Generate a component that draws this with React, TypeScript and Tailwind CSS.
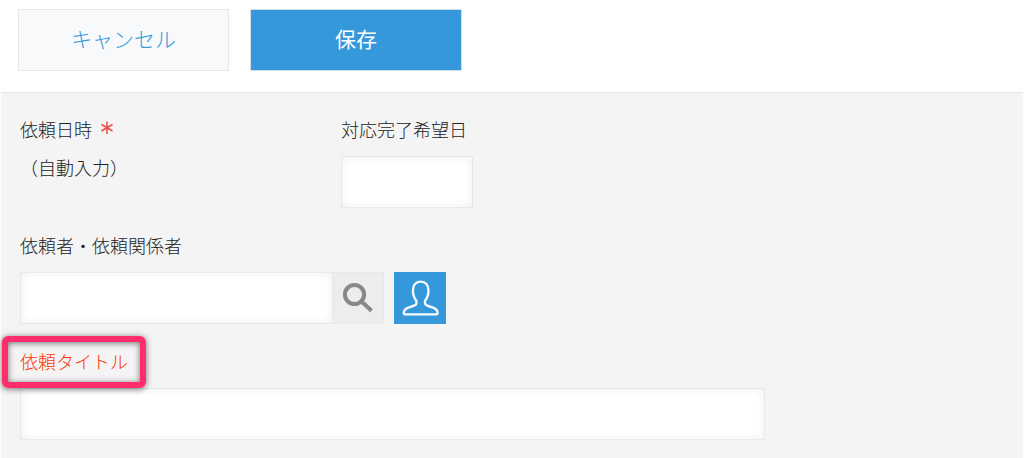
import type { ReactNode } from "react";

const inputClass =
  "block h-[52px] border border-[#e6e9e9] bg-white px-3 text-lg text-[#333333] shadow-[inset_0_0_8px_rgba(0,0,0,0.07)] outline-none";

function FieldLabel({ htmlFor, children }: { htmlFor: string; children: ReactNode }) {
  return (
    <label htmlFor={htmlFor} className="block w-fit text-lg leading-[22px]">
      {children}
    </label>
  );
}

function SearchIcon() {
  return (
    <svg width="32" height="32" viewBox="0 0 32 32" fill="none" stroke="#888888" aria-hidden="true">
      <circle cx="12.5" cy="12.5" r="9.6" strokeWidth="4" />
      <path d="M19.5 19.5 29.500 28.700" strokeWidth="4" />
    </svg>
  );
}

function UserIcon() {
  return (
    <svg
      width="40"
      height="40"
      viewBox="0 0 40 40"
      fill="none"
      stroke="#f5faff"
      strokeWidth="2.4"
      strokeLinejoin="round"
      aria-hidden="true"
    >
      <path d="M20.700 3.600c-4.800 0-7.800 3.700-7.800 9 0 4.400 1.500 7.800 3.500 10.400v2.200c0 1.200-.8 1.800-2 2.300l-6.600 2.400c-2.600 1-4 2.700-4 5.200 0 .9.500 1.300 1.400 1.300h31c.9 0 1.400-.4 1.400-1.300 0-2.500-1.400-4.200-4-5.200l-6.600-2.400c-1.200-.5-2-1.100-2-2.300v-2.200c2-2.600 3.500-6 3.500-10.400 0-5.300-3-9-7.800-9z" />
    </svg>
  );
}

export default function App() {
  return (
    <div className="flex min-h-screen flex-col bg-white font-['Noto_Sans_CJK_JP',sans-serif] font-light text-[#222222]">
      <header className="flex gap-[21px] border-b border-[#e3e7e8] px-[18px] pt-[9px] pb-[21px]">
        <button
          type="button"
          className="h-[62px] w-[211px] border border-[#e3e7e8] bg-[#f7f9fb] pb-[3px] text-[21px] text-[#3498db]"
        >
          キャンセル
        </button>
        <button
          type="submit"
          form="request-form"
          className="h-[62px] w-[212px] border border-[#cfdfeb] bg-[#3498db] pb-[3px] text-[21px] font-normal text-white"
        >
          保存
        </button>
      </header>

      <form
        id="request-form"
        onSubmit={(e) => e.preventDefault()}
        className="mx-px flex flex-1 flex-col gap-[26px] bg-[#f4f4f4] px-[19px] pt-[25px] pb-[18px]"
      >
        <div className="flex">
          <div className="w-[321px]">
            <div className="flex items-start gap-[9px] text-lg leading-[22px]">
              <span>依頼日時</span>
              <svg
                className="mt-[3px]"
                width="12"
                height="14"
                viewBox="0 0 12 14"
                stroke="#ee4b45"
                strokeWidth="1.5"
                role="img"
                aria-label="必須"
              >
                <path d="M6 0.500v12.500M0.500 3.500l11 6.500M11.500 3.500l-11 6.500" />
              </svg>
            </div>
            <p className="mt-4 text-lg leading-[22px]">（自動入力）</p>
          </div>
          <div className="space-y-4">
            <FieldLabel htmlFor="due-date">対応完了希望日</FieldLabel>
            <input id="due-date" type="text" className={`${inputClass} w-[132px]`} />
          </div>
        </div>

        <div className="space-y-4">
          <FieldLabel htmlFor="members">依頼者・依頼関係者</FieldLabel>
          <div className="flex">
            <input id="members" type="text" className={`${inputClass} w-[313px]`} />
            <button
              type="button"
              aria-label="検索"
              className="flex h-[52px] w-[51px] items-center justify-center border-y border-r border-[#e6e9e9] bg-[#ededed]"
            >
              <SearchIcon />
            </button>
            <button
              type="button"
              aria-label="ユーザーを選択"
              className="ml-[10px] flex h-[52px] w-[52px] items-center justify-center bg-[#3498db]"
            >
              <UserIcon />
            </button>
          </div>
        </div>

        <div className="space-y-4">
          <FieldLabel htmlFor="title">
            <span className="relative block text-[#ff3300]">
              依頼タイトル
              <span className="pointer-events-none absolute -inset-x-[18px] -top-[14px] -bottom-4 rounded-md border-[6px] border-[#ff2d6b] shadow-[0_1px_6px_rgba(0,0,0,0.55),inset_0_1px_6px_rgba(0,0,0,0.55)]" />
            </span>
          </FieldLabel>
          <input id="title" type="text" className={`${inputClass} w-full max-w-[745px]`} />
        </div>
      </form>
    </div>
  );
}
